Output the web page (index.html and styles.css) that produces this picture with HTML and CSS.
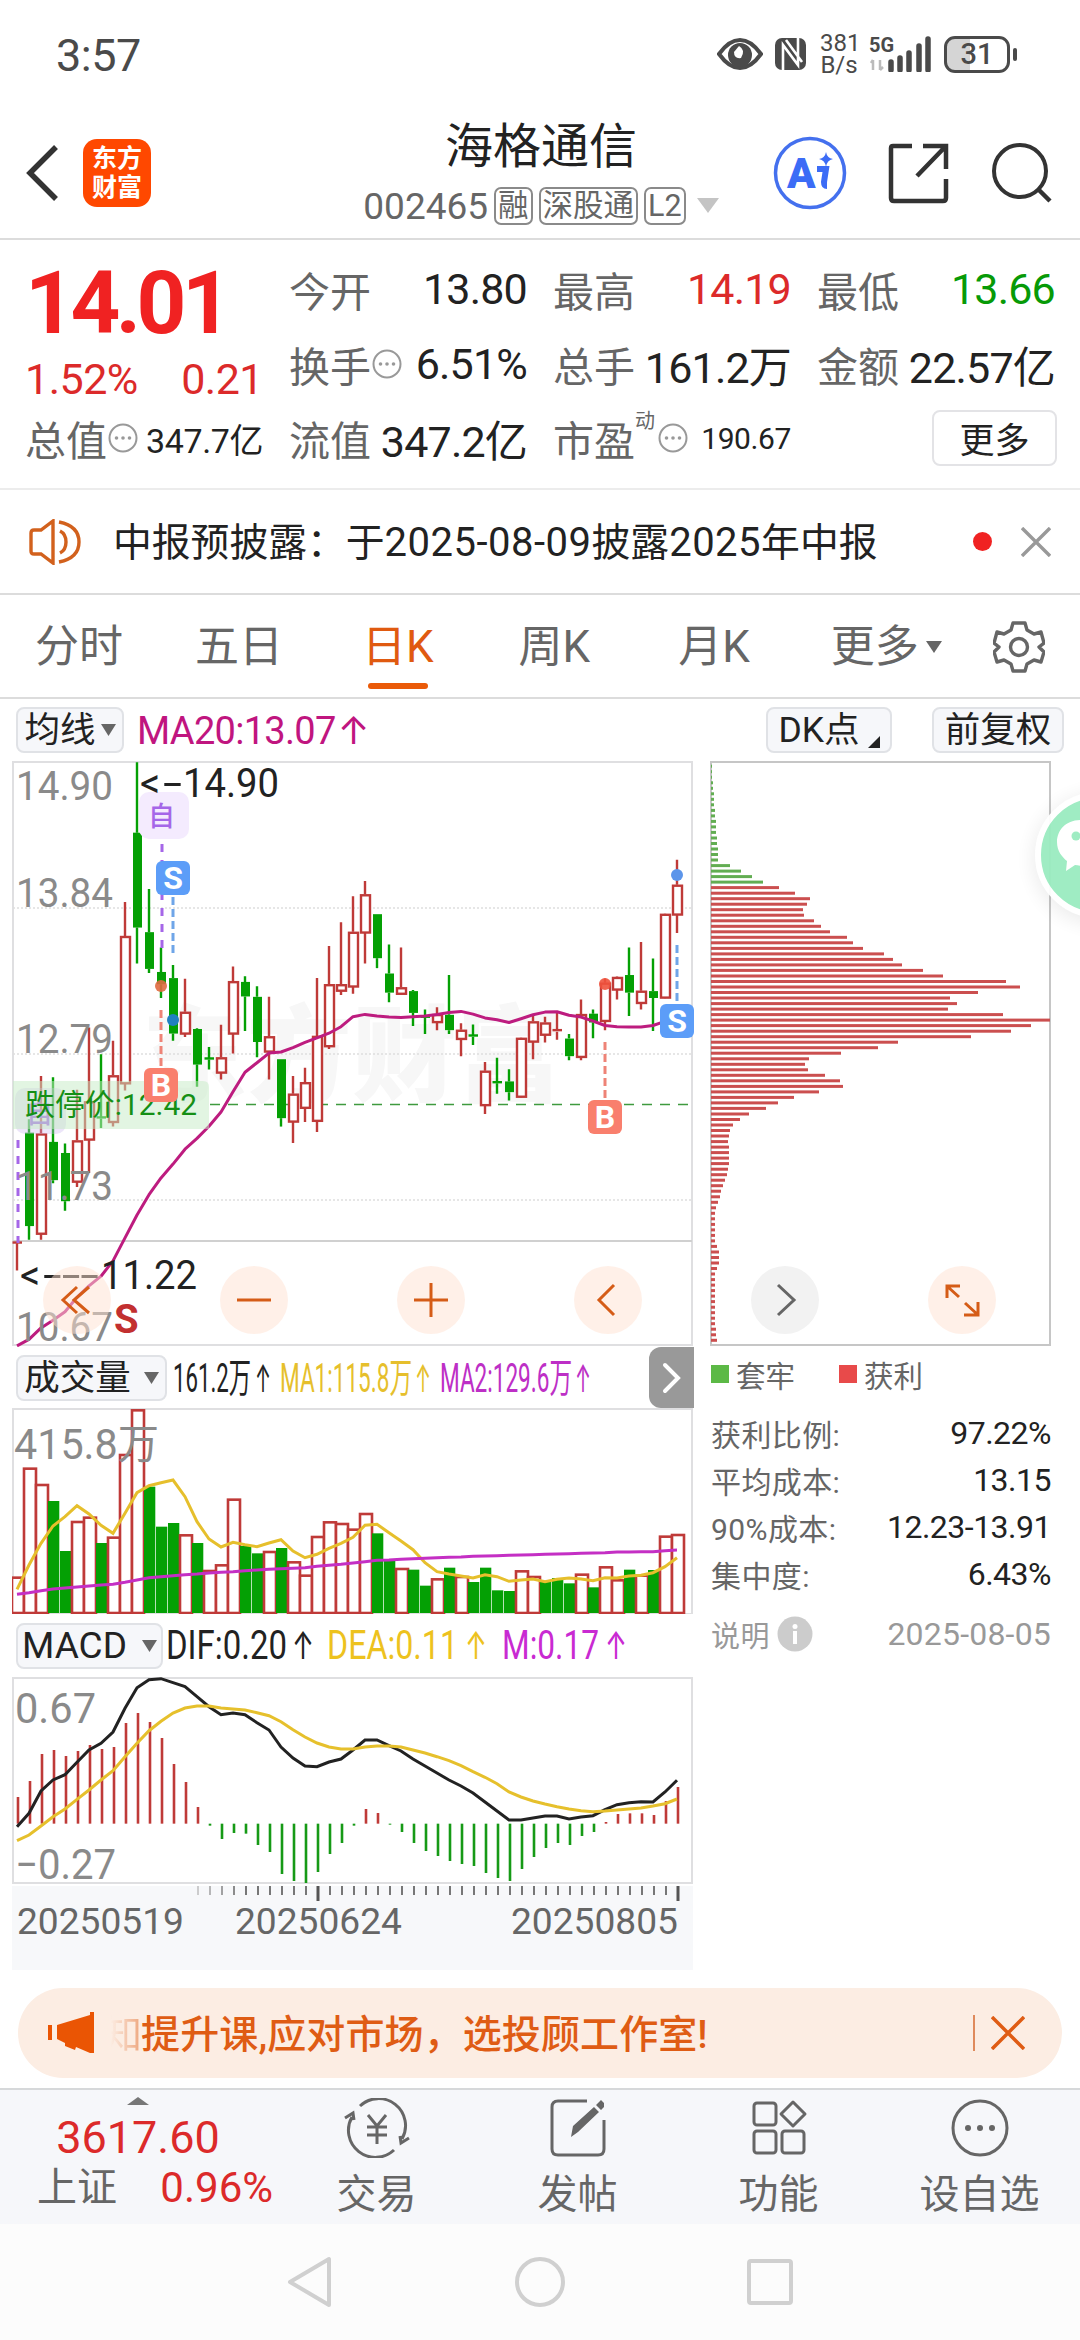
FILE: index.html
```html
<!DOCTYPE html>
<html lang="zh-CN">
<head>
  <meta charset="UTF-8" />
  <meta name="viewport" content="width=device-width, initial-scale=1.0" />
  <title>海格通信 002465</title>
  <link rel="stylesheet" href="styles.css">
</head>
<body>
  <div class="status-bar">
    <span class="clock">3:57</span>
    <div class="status-icons">
      <svg width="46" height="34" viewBox="0 0 46 34"><path d="M2 17 Q12 3 23 3 Q34 3 44 17 Q34 31 23 31 Q12 31 2 17Z" fill="none" stroke="#4a4a4a" stroke-width="4"/><circle cx="23" cy="18" r="12" fill="#4a4a4a"/><path d="M22 9 Q29 13 24 21 Q17 22 17 15" fill="#fff"/></svg>
      <svg class="nfc" width="31" height="32" viewBox="0 0 31 32"><rect width="31" height="32" rx="7" fill="#4a4a4a"/><path d="M8 32V7L23 27V0M11 2L27 24" fill="none" stroke="#fff" stroke-width="2.6"/></svg>
      <div class="speed">381<br>B/s</div>
      <div class="signal">
        <span>5G</span>
        <svg width="64" height="36" viewBox="0 0 64 36"><path d="M4 24v10M2 27l2-3M11 24v10M11 34l3-3" stroke="#bbb" stroke-width="2.5" fill="none"/><path d="M22 26v8M31 22v12M40 17v17M50 10v24M59 3v31" stroke="#4a4a4a" stroke-width="5.5" stroke-linecap="round"/></svg>
      </div>
      <div class="battery"><b>31</b></div>
    </div>
  </div>

  <header class="title-bar">
    <svg class="back" width="34" height="58" viewBox="0 0 34 58"><path d="M30 3L4 29L30 55" fill="none" stroke="#333" stroke-width="5.5"/></svg>
    <div class="logo">东方<br>财富</div>
    <div class="stock">
      <div class="stock-name">海格通信</div>
      <div class="stock-code">
        <span>002465</span><i class="tag">融</i><i class="tag">深股通</i><i class="tag">L2</i>
        <svg width="22" height="16" viewBox="0 0 22 16"><path d="M0 0h22L11 15z" fill="#c4c4c4"/></svg>
      </div>
    </div>
    <div class="title-actions">
      <svg width="74" height="74" viewBox="0 0 74 74"><circle cx="37" cy="37" r="34.5" fill="none" stroke="#4470ee" stroke-width="3.5"/><text x="14" y="52" class="ai">A</text><path d="M44 33H53L51 46Q51 50 54 50" fill="none" stroke="#3c6cf6" stroke-width="6"/><path d="M53 16Q54 22 60 23Q54 24 53 31Q52 24 46 23Q52 22 53 16Z" fill="#3c6cf6"/></svg>
      <svg width="62" height="62" viewBox="0 0 62 62"><path d="M24 4H5Q3 4 3 6V56Q3 59 6 59H55Q58 59 58 56V37M35 4H58V27M57 5L29 34" fill="none" stroke="#333" stroke-width="4.5"/></svg>
      <svg width="62" height="62" viewBox="0 0 62 62"><circle cx="29" cy="29" r="26" fill="none" stroke="#333" stroke-width="4"/><path d="M47 47L59 59" stroke="#333" stroke-width="4.5"/></svg>
    </div>
  </header>

  <section class="quote">
    <div class="price-cell">
      <div class="price">14.01</div>
      <div class="change"><span>1.52%</span><span>0.21</span></div>
    </div>
    <div class="cell"><label>今开</label><b>13.80</b></div>
    <div class="cell"><label>最高</label><b class="up">14.19</b></div>
    <div class="cell"><label>最低</label><b class="down">13.66</b></div>
    <div class="cell"><label>换手</label><svg class="dots"><use href="#more-dots"/></svg><b>6.51%</b></div>
    <div class="cell"><label>总手</label><b>161.2万</b></div>
    <div class="cell"><label>金额</label><b>22.57亿</b></div>
    <div class="cell"><label>总值</label><svg class="dots"><use href="#more-dots"/></svg><b class="small">347.7亿</b></div>
    <div class="cell"><label>流值</label><b>347.2亿</b></div>
    <div class="cell"><label>市盈</label><sup>动</sup><svg class="dots"><use href="#more-dots"/></svg><b class="tiny">190.67</b></div>
    <div class="cell"><button class="more-btn">更多</button></div>
  </section>

  <section class="notice">
    <svg width="54" height="46" viewBox="0 0 54 46"><path d="M24 2V44L12 35H5Q2 35 2 32V14Q2 11 5 11H12ZM31 12Q37 15 37 23Q37 31 31 34M30 3Q50 7 50 23Q50 39 30 43" fill="none" stroke="#d2611d" stroke-width="3.4"/></svg>
    <span class="notice-text">中报预披露：于<em>2025-08-09</em>披露<em>2025</em>年中报</span>
    <i class="dot"></i>
    <svg width="30" height="30" viewBox="0 0 30 30"><path d="M1 1L29 29M29 1L1 29" stroke="#999" stroke-width="3.4"/></svg>
  </section>

  <nav class="tabs">
    <span>分时</span><span>五日</span><span class="active">日K</span><span>周K</span><span>月K</span>
    <span class="tab-more">更多<svg width="16" height="12" viewBox="0 0 16 12"><path d="M0 0h16L8 12z" fill="#666"/></svg></span>
    <svg class="gear" width="52" height="52" viewBox="0 0 52 52"><path d="M20 2H32L34 9L41 13L48 11L51 22L46 26L51 31L48 41L41 39L34 43L32 50H20L18 43L11 39L4 41L1 31L6 26L1 22L4 11L11 13L18 9Z" fill="none" stroke="#666" stroke-width="3.4" stroke-linejoin="round"/><circle cx="26" cy="26" r="8.5" fill="none" stroke="#666" stroke-width="3.4"/></svg>
  </nav>

  <div class="toolbar">
    <button class="chip ma-btn">均线<svg width="15" height="12" viewBox="0 0 15 12"><path d="M0 0h15L7.500 12z" fill="#666"/></svg></button>
    <span class="ma20">MA20:13.07<em>↑</em></span>
    <button class="chip dk-btn">DK点<svg width="12" height="12" viewBox="0 0 12 12"><path d="M12 0V12H0z" fill="#222"/></svg></button>
    <button class="chip fq-btn">前复权</button>
  </div>

  <main class="charts">
    <div class="left">
      <svg id="kline" width="682" height="587" viewBox="12 760 682 587"></svg>

      <div class="ind-head">
        <button class="chip vol-btn">成交量<svg width="15" height="12" viewBox="0 0 15 12"><path d="M0 0h15L7.500 12z" fill="#666"/></svg></button>
        <svg width="470" height="60" viewBox="166 1347 470 60" class="ind-text">
          <text x="172" y="1391" textLength="78" fill="#222">161.2万</text><text class="arrow" x="254" y="1391" textLength="16" fill="#222">↑</text>
          <text x="279" y="1391" textLength="132" fill="#e6bf2c">MA1:115.8万</text><text class="arrow" x="414" y="1391" textLength="16" fill="#e6bf2c">↑</text>
          <text x="439" y="1391" textLength="132" fill="#bd2fc6">MA2:129.6万</text><text class="arrow" x="574" y="1391" textLength="16" fill="#bd2fc6">↑</text>
        </svg>
        <div class="expand"><svg width="20" height="32" viewBox="0 0 20 32"><path d="M3 3L16 16L3 29" fill="none" stroke="#fff" stroke-width="4" stroke-linecap="round"/></svg></div>
      </div>

      <svg id="volume" width="682" height="206" viewBox="12 1408 682 206"></svg>

      <div class="ind-head macd-head">
        <button class="chip macd-btn">MACD<svg width="15" height="12" viewBox="0 0 15 12"><path d="M0 0h15L7.500 12z" fill="#666"/></svg></button>
        <svg width="500" height="62" viewBox="162 1615 500 62" class="ind-text">
          <text x="165" y="1659" textLength="121" fill="#222">DIF:0.20</text><text class="arrow" x="291" y="1659" textLength="22" fill="#222">↑</text>
          <text x="326" y="1659" textLength="131" fill="#edc21e">DEA:0.11</text><text class="arrow" x="464" y="1659" textLength="22" fill="#edc21e">↑</text>
          <text x="501" y="1659" textLength="97" fill="#c92ad2">M:0.17</text><text class="arrow" x="604" y="1659" textLength="22" fill="#c92ad2">↑</text>
        </svg>
      </div>

      <svg id="macd" width="682" height="293" viewBox="12 1677 682 293"></svg>
    </div>

    <div class="right">
      <svg id="chips" width="342" height="587" viewBox="710 760 342 587"></svg>
      <div class="legend"><i class="sq green"></i>套牢<i class="sq red"></i>获利</div>
      <div class="info-row"><label>获利比例:</label><b>97.22%</b></div>
      <div class="info-row"><label>平均成本:</label><b>13.15</b></div>
      <div class="info-row"><label>90%成本:</label><b>12.23-13.91</b></div>
      <div class="info-row"><label>集中度:</label><b>6.43%</b></div>
      <div class="info-row note"><label>说明</label><svg width="36" height="36" viewBox="0 0 36 36"><circle cx="18" cy="18" r="17.500" fill="#ccc"/><circle cx="18" cy="10.500" r="2.500" fill="#fff"/><path d="M18 15V28" stroke="#fff" stroke-width="4"/></svg><b>2025-08-05</b></div>
    </div>

    <div class="controls">
      <i><svg viewBox="0 0 68 68"><path d="M34 21L20 34L34 47M46 21L31 34L46 47"/></svg></i>
      <i><svg viewBox="0 0 68 68"><path d="M17 34H51"/></svg></i>
      <i><svg viewBox="0 0 68 68"><path d="M17 34H51M34 17V51"/></svg></i>
      <i><svg viewBox="0 0 68 68"><path d="M40 19L25 34L40 49"/></svg></i>
      <i class="grey"><svg viewBox="0 0 68 68"><path d="M27 19L43 34L27 49"/></svg></i>
      <i><svg viewBox="0 0 68 68"><path d="M19 32V20H32M20 21L31 31M50 36V49H36M49 48L37 37"/></svg></i>
    </div>

    <div class="wechat">
      <svg width="52" height="60" viewBox="0 0 52 60"><path d="M26 2C11 2 2 12 2 24C2 33 7 39 12 43L11 53L20 47Q26 48 34 48L52 44V4Z" fill="#fff"/><circle cx="21" cy="18" r="4.500" fill="#9aecc0"/></svg>
    </div>
  </main>

  <div class="banner">
    <svg width="46" height="42" viewBox="0 0 46 42"><path d="M42 0H46V41H42L28 35L27 38L17 34V31L9 27V13L42 3ZM0 13H4V28H0Z" fill="#ea5504"/></svg>
    <span class="banner-text"><s>知</s>提升课,应对市场，选投顾工作室!</span>
    <i></i>
    <svg class="close" width="34" height="34" viewBox="0 0 34 34"><path d="M1 1L33 33M33 1L1 33" stroke="#df5c14" stroke-width="3.500"/></svg>
  </div>

  <footer class="bottom-nav">
    <div class="index">
      <svg width="22" height="8" viewBox="0 0 22 8"><path d="M0 8L11 0L22 8z" fill="#777"/></svg>
      <div class="index-price">3617.60</div>
      <div class="index-row"><span>上证</span><b>0.96%</b></div>
    </div>
    <div class="nav-item">
      <svg width="66" height="60" viewBox="0 0 66 60"><path d="M16 8A27 27 0 0 1 58 41M50 52A27 27 0 0 1 8 19M1 20L9 15L10 22M65 40L57 45L56 38M24 17L33 28L42 17M33 28V46M23 29H43M23 37H43" fill="none" stroke="#666" stroke-width="3"/></svg>
      交易
    </div>
    <div class="nav-item">
      <svg width="66" height="60" viewBox="0 0 66 60"><path d="M42 3H13Q7 3 7 9V51Q7 57 13 57H53Q59 57 59 51V22" fill="none" stroke="#666" stroke-width="3"/><path d="M26 39L28 28L49 9L54 14L33 34ZM51 7L56 2L59 5L59 9L56 12Z" fill="#666"/></svg>
      发帖
    </div>
    <div class="nav-item">
      <svg width="66" height="60" viewBox="0 0 66 60"><g fill="none" stroke="#666" stroke-width="3"><rect x="8" y="5" width="22" height="22" rx="3"/><rect x="8" y="33" width="22" height="22" rx="3"/><rect x="36" y="33" width="22" height="22" rx="3"/><path d="M47 4L59 16L47 28L35 16Z" stroke-linejoin="round"/></g></svg>
      功能
    </div>
    <div class="nav-item">
      <svg width="66" height="60" viewBox="0 0 66 60"><circle cx="33" cy="30" r="27" fill="none" stroke="#666" stroke-width="3"/><g fill="#666"><circle cx="21" cy="30" r="3"/><circle cx="33" cy="30" r="3"/><circle cx="45" cy="30" r="3"/></g></svg>
      设自选
    </div>
  </footer>

  <div class="system-nav">
    <svg width="46" height="52" viewBox="0 0 46 52"><path d="M42 3V49L3 26Z" fill="none" stroke="#d0d0d0" stroke-width="4" stroke-linejoin="round"/></svg>
    <svg width="50" height="52" viewBox="0 0 50 52"><circle cx="25" cy="26" r="23" fill="none" stroke="#d0d0d0" stroke-width="4"/></svg>
    <svg width="46" height="52" viewBox="0 0 46 52"><rect x="2" y="5" width="42" height="42" rx="2" fill="none" stroke="#d0d0d0" stroke-width="4"/></svg>
  </div>

  <svg class="defs">
    <symbol id="more-dots" viewBox="0 0 30 30"><circle cx="15" cy="15" r="13.500" fill="none" stroke="#999" stroke-width="2"/><circle cx="8.500" cy="15" r="1.800" fill="#999"/><circle cx="15" cy="15" r="1.800" fill="#999"/><circle cx="21.500" cy="15" r="1.800" fill="#999"/></symbol>
  </svg>

  <script src="charts.js"></script>
</body>
</html>
```
FILE: styles.css
```css
:root {
  --red: #dc2a2a;
  --green: #079a07;
  --text: #222;
  --label: #666;
  --orange: #e05a10;
  --panel: #f6f7fa;
}

* {
  box-sizing: border-box;
}

body {
  margin: 0;
  width: 1080px;
  height: 2340px;
  overflow: hidden;
  display: flex;
  flex-direction: column;
  background: #fff;
  color: var(--text);
  font-family: Roboto, "Noto Sans CJK SC", sans-serif;
}

svg {
  display: block;
  flex: none;
}

b, i, em, s {
  font-weight: 400;
  font-style: normal;
  text-decoration: none;
}

button {
  font-family: inherit;
  color: var(--text);
  padding: 0;
}

.defs {
  position: absolute;
  width: 0;
  height: 0;
}

/* status bar */
.status-bar {
  height: 108px;
  display: flex;
  justify-content: space-between;
  align-items: center;
  padding: 0 70px 0 56px;
  color: #4a4a4a;
}

.clock {
  font-size: 45px;
  letter-spacing: -0.5px;
  padding-top: 2px;
}

.status-icons {
  display: flex;
  align-items: center;
}

.nfc {
  margin: 0 14px 0 12px;
}

.speed {
  width: 38px;
  font-size: 24px;
  line-height: 22px;
  text-align: center;
}

.signal {
  position: relative;
  margin: 0 11px 0 11px;
}

.signal span {
  position: absolute;
  left: 0;
  top: -1px;
  font-size: 20px;
  line-height: 20px;
  font-weight: 700;
}

.battery {
  position: relative;
  width: 66px;
  height: 37px;
  border: 3px solid #4a4a4a;
  border-radius: 11px;
  background: linear-gradient(90deg, #d5d5d5 38%, #fff 38%);
  text-align: center;
  line-height: 31px;
}

.battery b {
  font-size: 29px;
  font-weight: 500;
}

.battery::after {
  content: "";
  position: absolute;
  right: -10px;
  top: 9px;
  width: 4px;
  height: 13px;
  border-radius: 2px;
  background: #4a4a4a;
}

/* title bar */
.title-bar {
  height: 132px;
  display: flex;
  align-items: center;
  padding: 0 27px 0 26px;
  border-bottom: 2px solid #dcdcdc;
}

.logo {
  width: 68px;
  height: 68px;
  margin-left: 23px;
  padding-top: 5px;
  border-radius: 14px;
  background: #ff4800;
  color: #fff;
  font-size: 25px;
  font-weight: 700;
  line-height: 29px;
  text-align: center;
}

.stock {
  width: 380px;
  margin-left: 200px;
  text-align: center;
}

.stock-name {
  font-size: 48px;
  line-height: 60px;
}

.stock-code {
  height: 52px;
  display: flex;
  align-items: center;
  justify-content: center;
  padding-top: 6px;
  font-size: 37px;
  color: var(--label);
}

.tag {
  height: 38px;
  margin-left: 6px;
  padding: 0 2px;
  border: 2px solid #8a8a8a;
  border-radius: 7px;
  font-size: 30.500px;
  line-height: 33px;
}

.stock-code .tag + svg {
  margin-left: 11px;
}

.title-actions {
  flex: 1;
  display: flex;
  align-items: center;
  justify-content: flex-end;
  gap: 41px;
}

.ai {
  font-size: 42px;
  font-weight: 900;
  fill: #3c6cf6;
}

/* quote */
.quote {
  height: 250px;
  padding: 14px 25px 0;
  display: grid;
  grid-template-columns: repeat(4, 238px);
  grid-template-rows: 75px 75px 73px;
  column-gap: 26px;
  border-bottom: 2px solid #ececec;
}

.price-cell {
  grid-row: span 2;
}

.price {
  height: 96px;
  font-size: 87px;
  font-weight: 700;
  line-height: 98px;
  letter-spacing: -4.500px;
  color: #f02222;
}

.change {
  display: flex;
  justify-content: space-between;
  font-size: 43px;
  line-height: 58px;
  letter-spacing: -0.5px;
  color: var(--red);
}

.cell {
  display: flex;
  align-items: center;
  padding-bottom: 5px;
  white-space: nowrap;
}

.cell label {
  font-size: 41px;
  color: var(--label);
}

.cell b {
  margin-left: auto;
  font-size: 43px;
  letter-spacing: -0.8px;
}

.cell b.small {
  font-size: 34px;
  letter-spacing: -0.4px;
}

.cell b.tiny {
  font-size: 30px;
  letter-spacing: -0.4px;
}

.cell sup {
  font-size: 20px;
  line-height: 20px;
  margin: -34px 2px 0 0;
  vertical-align: 0;
  color: var(--label);
}

.dots {
  width: 30px;
  height: 30px;
  margin-left: 1px;
}

.up {
  color: var(--red);
}

.down {
  color: var(--green);
}

.more-btn {
  width: 125px;
  height: 56px;
  margin: 0 -2px 0 auto;
  padding-bottom: 4px;
  border: 2px solid #e3e3e6;
  border-radius: 8px;
  background: #fff;
  font-size: 35px;
}

/* notice */
.notice {
  height: 105px;
  display: flex;
  align-items: center;
  padding: 0 29px;
  border-bottom: 2px solid #dcdcdc;
}

.notice-text {
  flex: 1;
  margin: 0 0 6px 30px;
  font-size: 38.800px;
}

.notice-text em {
  font-size: 40px;
  letter-spacing: 0.5px;
}

.dot {
  width: 19px;
  height: 19px;
  margin-right: 29px;
  border-radius: 50%;
  background: #f02222;
}

/* tabs */
.tabs {
  height: 104px;
  display: flex;
  align-items: center;
  padding: 2px 35px 0 35px;
  border-bottom: 2px solid #dcdcdc;
  font-size: 44px;
  line-height: 60px;
  color: var(--label);
}

.tabs span {
  position: relative;
  margin-right: 72px;
}

.tabs span.active {
  margin: 0 85px 0 7px;
  color: var(--orange);
}

.tabs .active::after {
  content: "";
  position: absolute;
  left: 6px;
  bottom: -12px;
  width: 60px;
  height: 6px;
  border-radius: 3px;
  background: #ea5a08;
}

.tabs .active ~ span {
  margin-right: 88px;
}

.tabs .tab-more {
  display: flex;
  align-items: center;
  gap: 7px;
  margin-left: -7px;
}

.tabs .gear {
  margin-left: auto;
}

.tabs .active ~ .tab-more {
  margin-right: 0;
}

/* toolbar */
.toolbar {
  height: 61px;
  display: flex;
  align-items: center;
  padding: 0 16px;
}

.chip {
  height: 46px;
  display: flex;
  align-items: center;
  justify-content: center;
  border: 2px solid #e0e2e6;
  border-radius: 8px;
  background: var(--panel);
  font-size: 35.500px;
  line-height: 40px;
  white-space: nowrap;
}

.ma-btn {
  width: 108px;
  gap: 5px;
}

.ma20 {
  flex: 1;
  margin-left: 13px;
  font-size: 38px;
  letter-spacing: -0.7px;
  color: #c0157f;
}

.ma20 em {
  font-family: Inter, sans-serif;
  margin-left: 2px;
}

.dk-btn {
  width: 126px;
  gap: 8px;
  margin-right: 40px;
}

.dk-btn svg {
  margin-top: 24px;
}

.fq-btn {
  width: 132px;
}

/* charts */
.charts {
  position: relative;
  height: 1210px;
  overflow: hidden;
  display: flex;
}

.left {
  width: 682px;
  margin-left: 12px;
}

.right {
  width: 342px;
  margin-left: 16px;
}

.charts text {
  white-space: pre;
}

.ind-head {
  height: 61px;
  display: flex;
  align-items: center;
  padding-left: 4px;
}

.macd-head {
  height: 63px;
}

.vol-btn {
  width: 151px;
  gap: 13px;
}

.macd-btn {
  width: 147px;
  gap: 15px;
  font-size: 37px;
}

.ind-text {
  font-size: 40px;
}

.arrow {
  font-family: Inter, sans-serif;
  font-size: 38px;
}

.expand {
  width: 45px;
  height: 61px;
  margin-left: auto;
  flex: none;
  display: flex;
  align-items: center;
  justify-content: center;
  border-radius: 12px 0 0 12px;
  background: #999;
}

.legend {
  height: 53px;
  margin-bottom: 3px;
  display: flex;
  align-items: center;
  font-size: 29.500px;
  color: var(--label);
}

.sq {
  width: 18px;
  height: 18px;
  margin: 0 7px 0 1px;
  background: #5cb946;
}

.sq.red {
  margin-left: 44px;
  background: #e84a4a;
}

.info-row {
  height: 47px;
  display: flex;
  align-items: center;
  padding: 12px 1px 0;
}

.info-row label {
  font-size: 30px;
  letter-spacing: 0.4px;
  color: var(--label);
}

.info-row b {
  margin-left: auto;
  font-size: 32px;
  letter-spacing: -0.5px;
}

.info-row.note {
  height: 73px;
}

.note label,
.note b {
  color: #999;
}

.note label {
  font-size: 29px;
  margin-right: 7px;
}

.info-row.note b {
  letter-spacing: 0.2px;
}

.controls {
  position: absolute;
  left: 43px;
  top: 506px;
  display: flex;
  gap: 109px;
}

.controls i {
  width: 68px;
  height: 68px;
  border-radius: 50%;
  background: rgba(255, 226, 210, 0.5);
}

.controls path {
  fill: none;
  stroke: #d55c17;
  stroke-width: 3;
}

.controls i.grey {
  background: #f2f2f2;
}

.controls .grey path {
  stroke: #666;
}

.wechat {
  position: absolute;
  left: 1035px;
  top: 32px;
  width: 126px;
  height: 126px;
  padding: 20px 0 0 14px;
  border: 6px solid #fff;
  border-radius: 50%;
  background: #9aecc0;
  box-shadow: 0 4px 24px rgba(0, 0, 0, 0.1);
  opacity: 0.95;
}

/* banner */
.banner {
  width: 1044px;
  height: 90px;
  margin: 18px 18px 10px;
  padding: 0 37px 0 30px;
  display: flex;
  align-items: center;
  border-radius: 45px;
  background: #fcede3;
  color: #df5c14;
}

.banner-text {
  flex: 1;
  margin: 0 0 5px 9px;
  font-size: 39px;
  font-weight: 500;
  letter-spacing: 0.1px;
}

.banner-text s {
  margin-right: -1px;
  color: transparent;
  background: linear-gradient(90deg, rgba(223, 92, 20, 0) 20%, rgba(223, 92, 20, 0.5));
  -webkit-background-clip: text;
  background-clip: text;
}

.banner i {
  width: 2px;
  height: 36px;
  margin-right: 16px;
  background: #df8a5c;
}

/* bottom nav */
.bottom-nav {
  height: 136px;
  display: flex;
  border-top: 2px solid #d6d8da;
  background: var(--panel);
}

.index {
  width: 276px;
  padding: 7px 0 0;
  display: flex;
  flex-direction: column;
  align-items: center;
  color: var(--red);
}

.index-price {
  height: 62px;
  font-size: 45px;
  line-height: 66px;
}

.index-row {
  width: 236px;
  margin-left: 34px;
  display: flex;
  justify-content: space-between;
  font-size: 42px;
  line-height: 42px;
}

.index-row span {
  font-size: 40px;
  color: var(--label);
}

.nav-item {
  width: 201px;
  padding-top: 8px;
  display: flex;
  flex-direction: column;
  align-items: center;
  font-size: 40px;
  line-height: 74px;
  color: var(--label);
}

.system-nav {
  flex: 1;
  display: flex;
  align-items: center;
  justify-content: center;
  gap: 182px;
  background: #fcfcfc;
}
```
FILE: charts.js
```js
const RED = "#bf3a38";
const GREEN = "#04a004";
const colX = i => 17 + i * 12;

function points(values, y) {
  return values.map((v, i) => colX(i) + "," + y(v).toFixed(1)).join(" ");
}

function text(x, y, w, str, fill, size, extra = "") {
  return `<text x="${x}" y="${y}" textLength="${w}" lengthAdjust="spacingAndGlyphs" fill="${fill}" font-size="${size}" ${extra}>${str}</text>`;
}

function frame(x, y, w, h, color = "#dfdfe1") {
  return `<rect x="${x}" y="${y}" width="${w}" height="${h}" fill="none" stroke="${color}" stroke-width="2"/>`;
}

// K line: [up, high, body top, body bottom, low]
const candles = [
  [1,1287,1287,1289,1360],[0,965,1000,1244,1280],[1,852,1002,1264,1280],[0,855,1024,1124,1132],
  [0,1028,1053,1179,1204],[1,888,1020,1128,1142],[1,725,918,1018,1105],[0,795,960,963,988],
  [1,760,850,972,984],[1,397,486,871,890],[0,32,216,464,558],[0,363,476,572,583],
  [0,516,580,612,648],[0,562,596,741,760],[1,598,684,741,750],[0,727,729,822,880],
  [0,776,806,809,835],[1,718,803,843,861],[1,566,604,741,793],[0,591,606,644,734],
  [0,617,645,763,803],[1,645,748,788,861],[0,808,808,962,984],[1,852,898,971,1027],
  [1,830,868,935,972],[1,596,747,969,998],[1,512,612,774,781],[1,450,612,629,640],
  [1,382,475,618,637],[1,342,377,477,558],[0,429,429,544,570],[0,508,584,634,659],
  [1,516,620,637,637],[0,627,630,687,721],[0,678,697,699,742],[1,672,690,711,732],
  [0,588,692,732,742],[1,714,731,755,800],[0,717,746,749,771],[1,815,838,928,951],
  [0,804,868,871,898],[0,834,866,894,916],[1,751,752,906,908],[1,695,709,762,808],
  [1,697,712,744,764],[1,685,732,736,757],[0,742,754,800,811],[1,652,690,802,811],
  [0,678,689,712,753],[1,597,608,708,732],[1,592,593,626,652],[0,516,588,634,695],
  [1,502,629,661,678],[0,545,630,648,734],[1,427,428,647,649],[1,287,352,430,478]
];
const ma20 = [1557,1540,1510,1490,1468,1430,1400,1375,1335,1275,1215,1162,1118,1082,1043,1015,983,946,893,842,817,792,789,778,764,752,740,723,697,691,695,698,699,697,695,691,686,683,690,700,705,712,702,692,685,684,693,698,708,720,723,724,724,720,709,690];
const ky = v => 750 + v * 0.3827;

function drawCandle([up, high, top, bottom, low], i) {
  const x = colX(i), color = up ? RED : GREEN;
  const t = ky(top), b = ky(bottom);
  let s = `<path d="M${x} ${ky(high)}V${t}M${x} ${b}V${ky(low)}" stroke="${color}" stroke-width="2.400"/>`;
  if (bottom - top < 5) {
    s += `<path d="M${x - 4.5} ${t}H${x + 5}" stroke="${color}" stroke-width="2.400"/>`;
  } else if (up) {
    s += `<rect x="${x - 4}" y="${t + 1}" width="9" height="${b - t - 1}" fill="#fff" stroke="${color}" stroke-width="2.400"/>`;
  } else {
    s += `<rect x="${x - 4}" y="${t}" width="9" height="${b - t}" fill="${color}"/>`;
  }
  return s;
}

function badge(x, y, letter, color) {
  return `<rect x="${x}" y="${y}" width="34" height="34" rx="6" fill="${color}"/>
    <text x="${x + 17}" y="${y + 28}" text-anchor="middle" fill="#fff" font-size="32" font-weight="700">${letter}</text>`;
}

function dashed(x, y1, y2, color) {
  return `<path d="M${x} ${y1}V${y2}" stroke="${color}" stroke-width="3" stroke-dasharray="8 4"/>`;
}

const BLUE = "#5c9df8", SALMON = "#f97f6d", PURPLE = "#a566e8";
let k = frame(13, 762, 679, 583);
k += `<text x="142" y="1093" fill="#f7f7f7" font-size="105" font-weight="900">东方财富</text>`;
[908, 1054, 1200].forEach(y => {
  k += `<path d="M13 ${y}H692" stroke="#dedede" stroke-width="1.500" stroke-dasharray="2 2"/>`;
});
k += `<path d="M13 1241H692" stroke="#d0d0d0" stroke-width="2"/>`;
k += `<path d="M210 1104.500H690" stroke="#3f9a3f" stroke-width="1.500" stroke-dasharray="10 8"/>`;
k += candles.map(drawCandle).join("");
k += `<polyline points="${points(ma20, ky)}" fill="none" stroke="#bd1c7f" stroke-width="3" stroke-linejoin="round"/>`;
k += `<rect x="15" y="1088" width="51" height="46" rx="10" fill="#c8b4ee" opacity=".35"/>`;
k += `<text x="26" y="1123" fill="${PURPLE}" font-size="27" font-weight="500">自</text>`;
k += `<path d="M13 1081H203Q209 1081 209 1087V1129H13Z" fill="#c5ebc5" opacity=".5"/>`;
k += text(25, 1115, 172, "跌停价:12.42", "#158f15", 30);
k += `<rect x="139" y="792" width="50" height="47" rx="10" fill="#f4ebfe"/>`;
k += `<text x="148" y="826" fill="${PURPLE}" font-size="27" font-weight="500">自</text>`;
k += `<path d="M162 844V948M18 1140V1243" stroke="${PURPLE}" stroke-width="3" stroke-dasharray="8 8"/>`;
k += badge(156, 861, "S", BLUE) + dashed(173, 897, 955, "#6fa5e8");
k += `<circle cx="173" cy="1020" r="6" fill="#2080c0"/><circle cx="161" cy="986" r="6" fill="#e06a40" opacity=".9"/>`;
k += dashed(161, 1010, 1068, "#ee8377") + badge(144, 1068, "B", SALMON);
k += `<circle cx="605" cy="984" r="6" fill="#f0523c" opacity=".9"/>`;
k += dashed(605, 1042, 1100, "#ee8377") + badge(588, 1100, "B", SALMON);
k += `<circle cx="677" cy="875" r="6" fill="#5c95ea"/>`;
k += dashed(677, 945, 1003, "#6fa5e8") + badge(660, 1004, "S", BLUE);
[["14.90", 800], ["13.84", 907], ["12.79", 1053], ["11.73", 1200], ["10.67", 1341]].forEach(([s, y]) => {
  k += text(16, y, 97, s, "#8a8a8a", 40.500);
});
// hyphens are stretched so that they reach from the price to its candle
k += `<g fill="#222" font-size="40"><text x="140" y="797">&lt;<tspan x="163" textLength="19" lengthAdjust="spacingAndGlyphs">-</tspan><tspan x="183" textLength="96" lengthAdjust="spacingAndGlyphs">14.90</tspan></text>
  <text x="20" y="1289">&lt;<tspan x="43" textLength="56" lengthAdjust="spacingAndGlyphs">---</tspan><tspan x="101" textLength="96" lengthAdjust="spacingAndGlyphs">11.22</tspan></text></g>`;
k += `<text x="114" y="1333" fill="#c23030" font-size="40" font-weight="700">S</text>`;
document.getElementById("kline").innerHTML = k;

// volume: positive = up (hollow), negative = down (filled)
const volume = [710,383,432,-483,-633,543,530,-609,590,342,208,-440,-560,-549,583,-609,690,673,476,-618,-640,633,-624,664,704,588,544,549,566,519,-580,-660,684,-689,-737,715,-683,708,-726,-683,-751,-753,691,708,-725,-714,-730,701,-742,679,718,-689,704,-690,587,582];
const volMa1 = [748,675,610,558,530,497,522,556,580,520,458,437,428,420,470,545,597,621,607,614,620,609,599,633,653,643,625,610,592,556,553,578,603,629,668,695,702,708,714,704,710,724,720,717,725,718,714,717,722,713,714,708,706,698,680,653];
const volMa2 = [763,758,752,747,744,741,738,735,733,727,720,713,710,707,704,702,699,697,695,692,690,688,686,685,683,679,676,673,669,665,661,660,658,656,655,653,652,651,649,648,647,646,645,644,643,642,641,640,639,638,636,636,635,635,632,630];
const vy = v => 1340 + v / 3;

let v = frame(13, 1409, 679, 205);
v += volume.map((n, i) => {
  const y = vy(Math.abs(n)), x = colX(i);
  return n > 0
    ? `<rect x="${x - 5}" y="${y + 1}" width="12" height="${1612 - y}" fill="#fff" stroke="${RED}" stroke-width="2.600"/>`
    : `<rect x="${x - 5}" y="${y}" width="11.300" height="${1613 - y}" fill="${GREEN}"/>`;
}).join("");
v += `<polyline points="${points(volMa1, vy)}" fill="none" stroke="#e6bf2c" stroke-width="3"/>`;
v += `<polyline points="${points(volMa2, vy)}" fill="none" stroke="#c42fc4" stroke-width="3"/>`;
v += text(14, 1459, 145, "415.8万", "#8a8a8a", 42);
document.getElementById("volume").innerHTML = v;

// MACD
const macd = [561,513,432,420,438,423,405,417,411,339,309,336,384,462,516,591,647,687,669,671,705,726,792,813,819,786,732,699,647,597,609,644,666,699,723,738,753,762,768,789,804,813,777,741,714,699,705,678,666,636,612,610,610,615,573,531];
const dif = [650,610,543,510,494,457,420,400,366,295,233,209,206,218,230,260,290,314,309,314,338,360,411,444,468,470,456,447,420,390,390,407,423,447,468,489,510,528,549,576,603,630,630,624,618,618,627,621,617,599,584,578,575,576,546,511];
const dea = [692,675,648,620,597,568,540,510,482,440,400,362,334,309,294,288,288,294,297,300,308,317,335,359,381,399,411,417,417,411,408,408,411,420,429,440,452,467,485,502,521,546,561,573,582,590,597,602,605,603,600,597,594,588,581,567];
const my = v => 1610 + v / 3;

let m = frame(13, 1678, 679, 205);
m += `<rect x="12" y="1886" width="681" height="84" fill="#f7f8fa"/>`;
m += macd.map((n, i) =>
  `<path d="M${colX(i) + 1} ${my(641)}V${my(n)}" stroke="${n < 641 ? RED : "#169a16"}" stroke-width="2.600"/>`
).join("");
m += `<polyline points="${points(dif, my)}" fill="none" stroke="#222" stroke-width="3"/>`;
m += `<polyline points="${points(dea, my)}" fill="none" stroke="#e6c02c" stroke-width="3"/>`;
for (let i = 15; i < 56; i++) {
  const long = i === 25 || i === 55;
  m += `<path d="M${colX(i) + 1} 1886V${long ? 1901 : 1895}" stroke="${long ? "#555" : "#777"}" stroke-width="${long ? 3 : 2}" opacity="${Math.min(1, (i - 13) / 6)}"/>`;
}
m += text(15, 1723, 81, "0.67", "#8a8a8a", 42);
m += text(15, 1879, 101, "−0.27", "#8a8a8a", 42);
m += text(17, 1934, 167, "20250519", "#666", 37);
m += text(235, 1934, 167, "20250624", "#666", 37);
m += text(511, 1934, 167, "20250805", "#666", 37);
document.getElementById("macd").innerHTML = m;

// chip distribution, first 22 rows are above the current price
const chips = [1,1,1,2,2,3,3,3,4,4,5,5,5,6,6,7,7,7,19,30,41,52,68,84,99,96,92,93,103,110,119,136,142,152,173,182,191,212,232,295,309,267,239,246,237,292,339,320,300,260,187,167,130,98,94,97,114,129,132,108,83,67,55,38,29,22,19,18,17,18,18,18,18,17,16,14,12,10,9,7,5,4,4,4,4,4,4,6,8,8,8,6,4,4,4,4,4,4,4,4,4,4,5,5,6];

let c = frame(711, 762, 339, 583, "#c6c6c6");
c += chips.map((n, i) =>
  `<rect x="711" y="${(764.7 + i * 5.52).toFixed(1)}" width="${n}" height="3" fill="${i < 22 ? "#62ad52" : "#cb4f4f"}"/>`
).join("");
document.getElementById("chips").innerHTML = c;

document.querySelectorAll(".ind-text text").forEach(t => t.setAttribute("lengthAdjust", "spacingAndGlyphs"));
```
